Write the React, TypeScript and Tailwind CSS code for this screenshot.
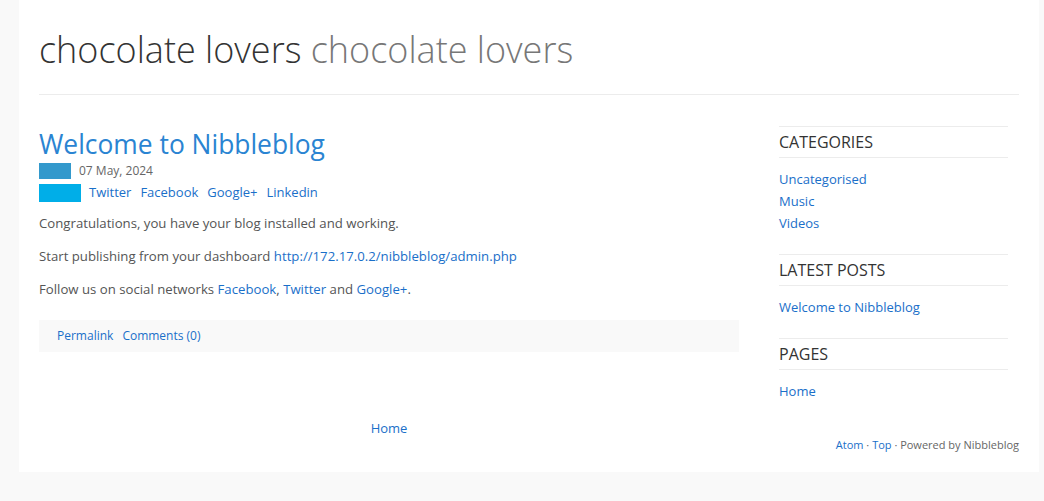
import React from "react";

const font = { fontFamily: '"Open Sans", "Noto Sans", sans-serif' };

export default function App() {
  return (
    <div className="min-h-[501px] w-[1044px] bg-[#f9f9f9]" style={font}>
      <div className="ml-[19px] w-[1020px] bg-white px-[20px] pb-[18px]">
        <header className="border-b border-[#ececec] pt-[29px] pb-[23px]">
          <h1 className="text-[36px] font-light leading-[42px] text-[#333]">
            chocolate lovers <span className="text-[#777]">chocolate lovers</span>
          </h1>
        </header>
        <div className="flex">
          <main className="w-[700px]">
            <h2 className="mt-[33px] text-[26.4px] leading-[32px] text-[#2a84d2]">Welcome to Nibbleblog</h2>
            <div className="mt-[2px] flex items-center gap-[8px]">
              <span className="h-[16px] w-[32px] bg-[#3399cc]" />
              <span className="text-[12px] text-[#666]">07 May, 2024</span>
            </div>
            <div className="mt-[3px] flex items-center gap-[9px] text-[13px] text-[#1a6fc9]">
              <span className="mr-[-1px] h-[18px] w-[42px] bg-[#00aee8]" />
              <a>Twitter</a>
              <a>Facebook</a>
              <a>Google+</a>
              <a>Linkedin</a>
            </div>
            <div className="mt-[10px] text-[13.2px] leading-[20px] text-[#555]">
              <p>Congratulations, you have your blog installed and working.</p>
              <p className="mt-[13px]">
                Start publishing from your dashboard <a className="text-[#1a6fc9]">http://172.17.0.2/nibbleblog/admin.php</a>
              </p>
              <p className="mt-[13px]">
                Follow us on social networks <a className="text-[#1a6fc9]">Facebook</a>, <a className="text-[#1a6fc9]">Twitter</a> and{" "}
                <a className="text-[#1a6fc9]">Google+</a>.
              </p>
            </div>
            <div className="mt-[21px] flex h-[32px] items-center gap-[9px] bg-[#f9f9f9] px-[18px] text-[12px] text-[#1a6fc9]">
              <a>Permalink</a>
              <a>Comments (0)</a>
            </div>
            <div className="mt-[67px] text-center text-[13px] text-[#1a6fc9]">
              <a>Home</a>
            </div>
          </main>
          <aside className="ml-[40px] w-[229px] pt-[31px]">
            {[
              { t: "CATEGORIES", items: ["Uncategorised", "Music", "Videos"] },
              { t: "LATEST POSTS", items: ["Welcome to Nibbleblog"] },
              { t: "PAGES", items: ["Home"] },
            ].map((s) => (
              <section key={s.t} className="mb-[20px]">
                <h3 className="border-y border-[#ececec] py-[4px] text-[16px] leading-[22px] text-[#333]">{s.t}</h3>
                <ul className="mt-[10px] text-[13px] leading-[22px] text-[#1a6fc9]">
                  {s.items.map((i) => (
                    <li key={i}>{i}</li>
                  ))}
                </ul>
              </section>
            ))}
          </aside>
        </div>
        <footer className="mt-[-1px] text-right text-[11px] text-[#666]">
          <a className="text-[#1a6fc9]">Atom</a> · <a className="text-[#1a6fc9]">Top</a> · Powered by Nibbleblog
        </footer>
      </div>
    </div>
  );
}
